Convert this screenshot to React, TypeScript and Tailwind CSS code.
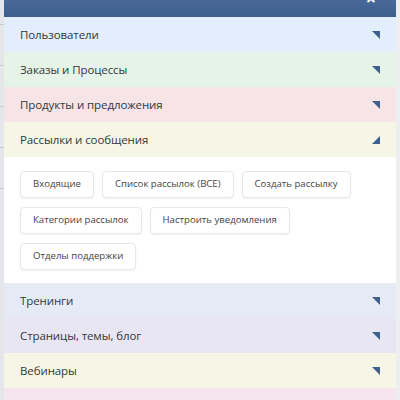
import { Fragment } from "react";

type Section = {
  title: string;
  bg: string;
  open?: boolean;
};

const SECTIONS: Section[] = [
  { title: "Пользователи", bg: "bg-[#e2eefb]" },
  { title: "Заказы и Процессы", bg: "bg-[#e6f4e8]" },
  { title: "Продукты и предложения", bg: "bg-[#f6e4e6]" },
  { title: "Рассылки и сообщения", bg: "bg-[#f5f6e6]", open: true },
  { title: "Тренинги", bg: "bg-[#e6eaf4]" },
  { title: "Страницы, темы, блог", bg: "bg-[#e9e6f3]" },
  { title: "Вебинары", bg: "bg-[#f5f6e6]" },
  { title: "", bg: "bg-[#f6e4ee]" },
];

const LINKS = [
  ["Входящие", "Список рассылок (ВСЕ)", "Создать рассылку"],
  ["Категории рассылок", "Настроить уведомления"],
  ["Отделы поддержки"],
];

function Corner({ open }: { open?: boolean }) {
  // small triangle in the right corner of every section header
  return (
    <svg width="8" height="8" viewBox="0 0 8 8" className="shrink-0">
      {open ? (
        <polygon points="8,0 8,8 0,8" fill="#3f5f8e" />
      ) : (
        <polygon points="0,0 8,0 8,8" fill="#3f5f8e" />
      )}
    </svg>
  );
}

export default function App() {
  return (
    <div
      className="flex h-[400px] w-[400px] overflow-hidden bg-[#e7e9ec]"
      style={{ fontFamily: '"Open Sans", "Noto Sans", sans-serif' }}
    >
      {/* page behind the panel */}
      <div className="flex w-[4px] shrink-0 flex-col bg-[#e4e6e9]">
        <div className="h-[24px]" />
        <div className="h-[1px] bg-[#c9ccd0]" />
        <div className="h-[40px]" />
        <div className="h-[1px] bg-[#c9ccd0]" />
        <div className="h-[40px]" />
        <div className="h-[1px] bg-[#c9ccd0]" />
        <div className="h-[40px]" />
        <div className="h-[1px] bg-[#c9ccd0]" />
        <div className="h-[40px]" />
        <div className="h-[1px] bg-[#c9ccd0]" />
      </div>

      <div className="flex w-[392px] shrink-0 flex-col">
        {/* Header */}
        <div className="relative h-[17px] shrink-0 bg-gradient-to-b from-[#48699a] to-[#3d5f8e]">
          <span className="absolute right-[20px] top-[-11px] text-[18px] font-bold leading-none text-white">
            ×
          </span>
        </div>

        {SECTIONS.map((s, idx) => (
          <Fragment key={idx}>
            <div
              className={`flex h-[35px] shrink-0 items-center justify-between pl-[16px] pr-[16px] ${s.bg}`}
            >
              <span className="text-[11.5px] tracking-[-0.1px] text-[#33373c]">{s.title}</span>
              <Corner open={s.open} />
            </div>
            {s.open && (
              <div className="flex shrink-0 flex-col gap-[9px] bg-white pb-[13px] pl-[16px] pt-[14px]">
                {LINKS.map((row, i) => (
                  <div key={i} className="flex gap-[8px]">
                    {row.map((l) => (
                      <span
                        key={l}
                        className="flex h-[27px] items-center rounded-[4px] border border-[#e8e8e8] bg-white px-[12px] text-[9.6px] text-[#444] shadow-[0_1px_2px_rgba(0,0,0,0.06)]"
                      >
                        {l}
                      </span>
                    ))}
                  </div>
                ))}
              </div>
            )}
          </Fragment>
        ))}
      </div>

      <div className="w-[4px] shrink-0 bg-[#eceef0]" />
    </div>
  );
}
